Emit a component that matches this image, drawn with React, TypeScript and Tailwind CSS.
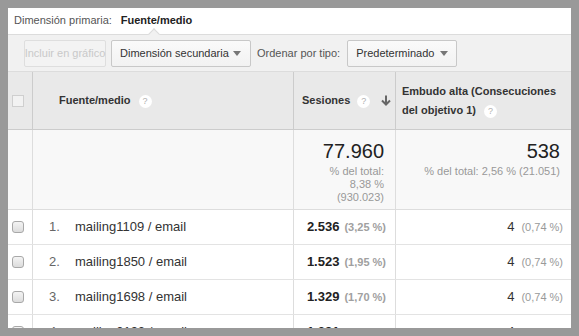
import React from "react";

const Help = () => (
  <span className="inline-flex items-center justify-center w-[13px] h-[13px] rounded-full bg-white text-[9px] leading-none text-[#b0b0b0] font-normal">
    ?
  </span>
);

const Caret = () => (
  <svg width="8" height="5" viewBox="0 0 8 5">
    <path d="M0 0H8L4 5Z" fill="#777" />
  </svg>
);

const rows = [
  { n: "1.", src: "mailing1109 / email", s: "2.536", sp: "(3,25 %)", e: "4", ep: "(0,74 %)" },
  { n: "2.", src: "mailing1850 / email", s: "1.523", sp: "(1,95 %)", e: "4", ep: "(0,74 %)" },
  { n: "3.", src: "mailing1698 / email", s: "1.329", sp: "(1,70 %)", e: "4", ep: "(0,74 %)" },
  { n: "4.", src: "mailing0192 / email", s: "1.291", sp: "(1,66 %)", e: "4", ep: "(0,74 %)" },
];

const grid = "grid grid-cols-[25px_261px_102px_175px] shrink-0";

export default function App() {
  return (
    <div
      className="w-[579px] h-[336px] bg-[#999999] pt-[8px] pl-[8px]"
      style={{ fontFamily: '"Liberation Sans", Arial, sans-serif' }}
    >
      <div className="relative w-[563px] h-[320px] bg-white overflow-hidden flex flex-col">
        {/* primary dimension */}
        <div className="h-[26px] shrink-0 flex items-center pl-[6px] pb-[3px] text-[11px] leading-[14px]">
          <span className="text-[#555]">Dimensión primaria:</span>
          <span className="ml-[9px] font-bold text-[#222]">Fuente/medio</span>
        </div>
        {/* toolbar */}
        <div className="h-[38px] shrink-0 border-t border-b border-[#dcdcdc] bg-[#f1f1f1] flex items-center pl-[16px] text-[11px]">
          <div className="h-[27px] w-[82px] flex items-center justify-center rounded-[2px] border border-[#dedede] bg-[#f3f3f3] text-[#c9c9c9] whitespace-nowrap">
            Incluir en gráfico
          </div>
          <div className="ml-[5px] h-[27px] w-[140px] flex items-center pl-[8px] pr-[9px] rounded-[2px] border border-[#c8c8c8] bg-gradient-to-b from-[#fafafa] to-[#f2f2f2] text-[#333] whitespace-nowrap">
            <span>Dimensión secundaria</span>
            <span className="ml-auto"><Caret /></span>
          </div>
          <span className="ml-[6px] text-[#555] whitespace-nowrap">Ordenar por tipo:</span>
          <div className="ml-[7px] h-[27px] w-[110px] flex items-center pl-[8px] pr-[8px] rounded-[2px] border border-[#c8c8c8] bg-gradient-to-b from-[#fafafa] to-[#f2f2f2] text-[#333] whitespace-nowrap">
            <span>Predeterminado</span>
            <span className="ml-auto"><Caret /></span>
          </div>
        </div>
        {/* notch */}
        <div className="absolute left-[142px] top-[22px] w-[8px] h-[8px] rotate-45 bg-[#f1f1f1] border-l border-t border-[#dcdcdc]" />

        {/* header */}
        <div className={`${grid} h-[58px] bg-[#e9e9e9] border-b border-[#cccccc] text-[11px] font-bold text-[#333]`}>
          <div className="border-r border-[#cccccc] flex items-center pl-[4px]">
            <span className="w-[12px] h-[12px] border border-[#cfcfcf] bg-[#f2f2f2]" />
          </div>
          <div className="border-r border-[#cccccc] flex items-center pl-[26px]">
            <span>Fuente/medio</span>
            <span className="ml-[8px]"><Help /></span>
          </div>
          <div className="border-r border-[#cccccc] flex items-center pl-[8px] pr-[4px]">
            <span>Sesiones</span>
            <span className="ml-[7px]"><Help /></span>
            <svg className="ml-auto" width="10" height="11" viewBox="0 0 10 11">
              <path d="M5 0.5V9.5M1 5.5L5 9.5L9 5.5" stroke="#666" strokeWidth="2" fill="none" />
            </svg>
          </div>
          <div className="flex flex-col justify-center pl-[6px] leading-[19px]">
            <span className="whitespace-nowrap">Embudo alta (Consecuciones</span>
            <span className="flex items-center">
              del objetivo 1)
              <span className="ml-[8px]"><Help /></span>
            </span>
          </div>
        </div>

        {/* summary */}
        <div className={`${grid} h-[80px] bg-[#f8f8f8] border-b border-[#dddddd]`}>
          <div className="border-r border-[#dddddd]" />
          <div className="border-r border-[#dddddd]" />
          <div className="border-r border-[#dddddd] flex flex-col items-end pr-[11px] pt-[9px]">
            <span className="text-[20px] leading-[24px] text-[#222]">77.960</span>
            <span className="text-[11px] leading-[13px] text-[#999] text-right mt-[2px]">
              % del total:
              <br />
              8,38 %
              <br />
              (930.023)
            </span>
          </div>
          <div className="flex flex-col items-end pr-[11px] pt-[9px]">
            <span className="text-[20px] leading-[24px] text-[#222]">538</span>
            <span className="text-[11px] leading-[13px] text-[#999] mt-[2px] whitespace-nowrap">
              % del total: 2,56 % (21.051)
            </span>
          </div>
        </div>

        {/* rows */}
        {rows.map((r) => (
          <div key={r.n} className={`${grid} h-[35px] bg-white border-b border-[#e3e3e3]`}>
            <div className="border-r border-[#dddddd] flex items-center pl-[4px]">
              <span className="w-[12px] h-[12px] rounded-[3px] border border-[#a8a8a8] bg-gradient-to-b from-[#f4f4f4] to-[#dcdcdc]" />
            </div>
            <div className="border-r border-[#dddddd] flex items-center pl-[16px] text-[13px]">
              <span className="w-[26px] text-[#666]">{r.n}</span>
              <span className="text-[#333]">{r.src}</span>
            </div>
            <div className="border-r border-[#dddddd] flex items-center justify-end pr-[9px]">
              <span className="text-[13px] font-bold text-[#222]">{r.s}</span>
              <span className="ml-[5px] text-[11px] font-bold text-[#a0a0a0]">{r.sp}</span>
            </div>
            <div className="flex items-center justify-end pr-[8px]">
              <span className="text-[13px] text-[#333]">{r.e}</span>
              <span className="ml-[7px] text-[11px] text-[#999]">{r.ep}</span>
            </div>
          </div>
        ))}
      </div>
    </div>
  );
}
